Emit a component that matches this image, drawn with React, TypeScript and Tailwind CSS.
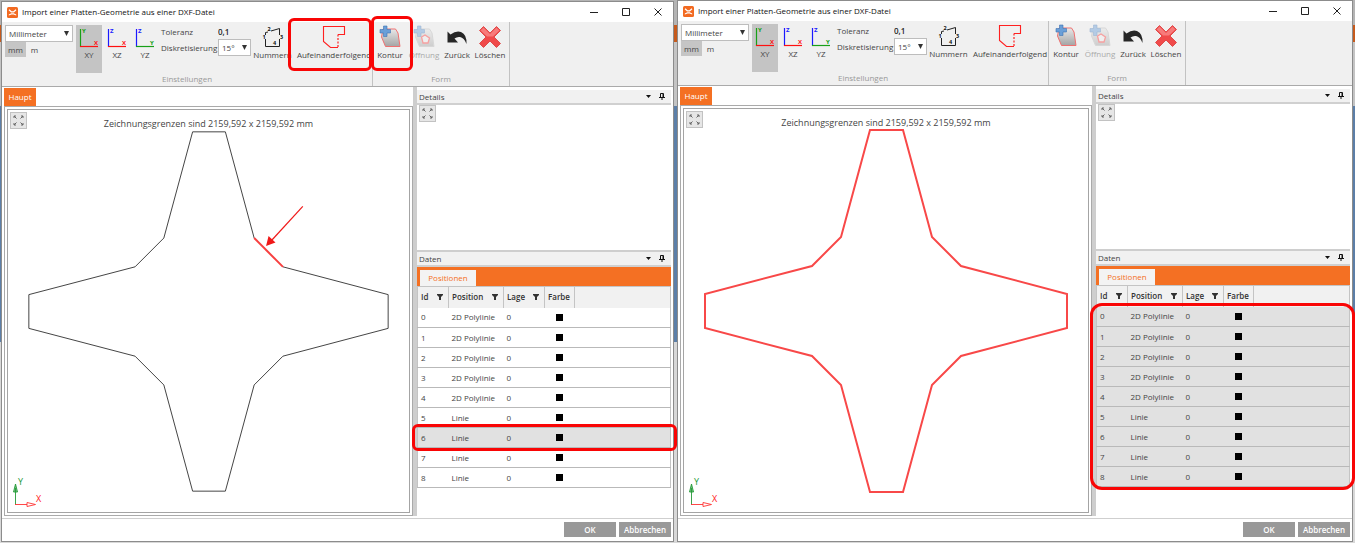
import React from "react";

type Plane = { name: string; up: string; side: string; upColor: string; sideColor: string };

const planes: Plane[] = [
  { name: "XY", up: "Y", side: "X", upColor: "#18a018", sideColor: "#ff1010" },
  { name: "XZ", up: "Z", side: "X", upColor: "#1a1aff", sideColor: "#ff1010" },
  { name: "YZ", up: "Z", side: "Y", upColor: "#1a1aff", sideColor: "#18a018" },
];

const rows = [0, 1, 2, 3, 4, 5, 6, 7, 8].map((id) => ({
  id,
  position: id < 5 ? "2D Polylinie" : "Linie",
  lage: 0,
}));

const outline =
  "186,21 219,21 248,128 277,157 383,185 383,219 277,247 248,276 219,383 186,383 157,276 128,247 21,219 21,185 128,157 157,128";

function Logo() {
  return (
    <svg className="size-[11px] shrink-0" viewBox="0 0 11 11">
      <rect width="11" height="11" rx="1.5" fill="#f26a21" />
      <path d="M2 2.800 L4.300 4.800 H6.700 L9 2.800" stroke="#fff" strokeWidth="1.2" fill="none" />
      <path d="M1.800 8.600 V7.600 L4.300 6.200 H6.700 L9.200 7.600 V8.600 L6.500 7.600 H4.500 Z" fill="#fff" />
    </svg>
  );
}

function PlaneIcon({ plane }: { plane: Plane }) {
  return (
    <svg className="h-[22px] w-[22px]" viewBox="0 0 22 22">
      <path d="M2.5 2 V20" stroke={plane.upColor} strokeWidth="1.2" />
      <path d="M2 19.5 H20" stroke={plane.sideColor} strokeWidth="1.2" />
      <text x="4" y="6" fontSize="6" fontWeight="700" fill={plane.upColor}>{plane.up}</text>
      <text x="16" y="18" fontSize="6" fontWeight="700" fill={plane.sideColor}>{plane.side}</text>
    </svg>
  );
}

function NumberIcon() {
  return (
    <svg className="h-6 w-6" viewBox="0 0 24 24">
      <path d="M4.500 14 V21.500 H18.500 V14 M18.500 10 V3.500 L10 6 M4.500 10 V7.500 L7 7" fill="none" stroke="#222" strokeWidth="1" />
      <g fontSize="5.5" fontWeight="700" fill="#111">
        <text x="6.500" y="6">2</text>
        <text x="1.500" y="14">1</text>
        <text x="19" y="14">3</text>
        <text x="12" y="20">4</text>
      </g>
    </svg>
  );
}

function SequenceIcon() {
  return (
    <svg className="h-6 w-6" viewBox="0 0 24 24">
      <path d="M16 22.5 H8.5 L1.5 16.5 V1.5 H22.5 V9.5 H16" fill="none" stroke="#ff2020" strokeWidth="1.1" />
      <path d="M16 9.5 V22" stroke="#ff2020" strokeWidth="1.2" strokeDasharray="2 1.5" />
    </svg>
  );
}

function ShapeIcon({ id, hole }: { id: string; hole?: boolean }) {
  return (
    <svg className={hole ? "h-6 w-6 opacity-45" : "h-6 w-6"} viewBox="0 0 24 24">
      <defs>
        <linearGradient id={id} x1="0" y1="0" x2="0" y2="1">
          <stop offset="0" stopColor="#e8e8e8" />
          <stop offset="1" stopColor="#a4a4a4" />
        </linearGradient>
      </defs>
      <path d="M5 4 H17.500 L20 8 L22 21.500 H7.500 L3.500 12 Z" fill={`url(#${id})`} stroke={hole ? "#bbb" : "#ef7070"} strokeWidth="1" />
      {hole && <path d="M9.500 12 L13 10 L17.500 13 L16 18 H11 Z" fill="#eee" stroke="#ff4040" strokeWidth="1.3" />}
      <path d="M5.500 1 H9 V4.500 H12.500 V8 H9 V11.500 H5.500 V8 H2 V4.500 H5.500 Z" fill="#6a9fd8" stroke="#3e74b3" strokeWidth=".6" />
    </svg>
  );
}

function UndoIcon() {
  return (
    <svg className="h-6 w-6" viewBox="0 0 24 24">
      <path d="M2.500 6.500 L5.500 9.500 Q11 5.500 16 7 Q22 9.500 21.500 19 Q19 12.500 15 12 Q12 11.500 9.500 13.500 L13 17.500 H2.500 Z" fill="#262626" />
    </svg>
  );
}

function DeleteIcon() {
  return (
    <svg className="h-6 w-6" viewBox="0 0 24 24">
      <path d="M5.500 1.500 L12 8 L18.500 1.500 L22.500 5.500 L16 12 L22.500 18.500 L18.500 22.500 L12 16 L5.500 22.500 L1.500 18.500 L8 12 L1.500 5.500 Z" fill="#f04a4a" stroke="#d93636" strokeWidth=".8" strokeLinejoin="round" />
      <path d="M5.500 2.600 L12 9 L18.500 2.600 L21.300 5.500 L15 11.500 H9 L2.600 5.500 Z" fill="#f77b7b" />
    </svg>
  );
}

function Tool({ label, icon, muted, marked, className }: { label: string; icon: React.ReactNode; muted?: boolean; marked?: string; className: string }) {
  return (
    <button type="button" disabled={muted} className={`relative flex shrink-0 flex-col items-center ${className}`}>
      {icon}
      <span className={muted ? "leading-3 text-[#aaa]" : "leading-3"}>{label}</span>
      {marked && <span className={`pointer-events-none absolute z-10 rounded-md border-[3px] border-[#f90505] ${marked}`} />}
    </button>
  );
}

function FitButton() {
  return (
    <button type="button" aria-label="Einpassen" className="flex size-[17px] items-center justify-center border border-[#c2c2c2] bg-[#e6e6e6]">
      <svg className="size-[13px]" viewBox="0 0 13 13" fill="none" stroke="#666" strokeWidth="1">
        <path d="M4.500 4.500 L2 2 M2 4 V2 H4 M8.500 4.500 L11 2 M9 2 H11 V4 M4.500 8.500 L2 11 M2 9 V11 H4 M8.500 8.500 L11 11 M11 9 V11 H9" />
      </svg>
    </button>
  );
}

function PanelHeader({ title }: { title: string }) {
  return (
    <div className="flex h-[15px] shrink-0 items-center border-b-2 border-[#d0d0d0] bg-[#f1f1f1] pr-1.5 pl-0.5">
      <h2 className="flex-1">{title}</h2>
      <button type="button" aria-label="Menü" className="mr-2">
        <svg className="h-[3px] w-[5px]" viewBox="0 0 5 3"><path d="M0 0 H5 L2.500 3 Z" fill="#111" /></svg>
      </button>
      <button type="button" aria-label="Anheften">
        <svg className="h-[7px] w-[6px]" viewBox="0 0 6 7"><path d="M1.500 4 V.5 H4.500 V4 M0 4.500 H6 M3 4.500 V7 M4 1 V4" fill="none" stroke="#111" /></svg>
      </button>
    </div>
  );
}

function FilterIcon() {
  return (
    <svg className="h-[6px] w-[6px]" viewBox="0 0 6 6"><path d="M0 0 H6 V1 L4 3 V6 H2 V3 L0 1 Z" fill="#333" /></svg>
  );
}

function Arrow() {
  return (
    <svg className="h-[7px] w-[5px]" viewBox="0 0 5 7"><path d="M0 1 H5 L2.500 6 Z" fill="#333" /></svg>
  );
}

function Picker({ id, value, label, className }: { id: string; value: string; label?: string; className: string }) {
  return (
    <div className={`relative flex items-center border border-[#bdbdbd] bg-white ${className}`}>
      <select id={id} aria-label={label} className="h-full w-full appearance-none pl-[3px] outline-none">
        <option>{value}</option>
      </select>
      <span className="pointer-events-none absolute right-[3px]"><Arrow /></span>
    </div>
  );
}

function Ribbon({ id, marked }: { id: string; marked: boolean }) {
  return (
    <div className="flex h-[65px] shrink-0 border-b border-[#aaa] bg-[#f0f0f0]">
      <section className="flex flex-col border-r border-[#c2c2c2]">
        <div className="flex flex-1 pt-[3px]">
          <div className="ml-[3px] w-[68px]">
            <Picker id={`${id}-unit`} label="Einheit" value="Millimeter" className="h-[17px]" />
            <div className="flex">
              <button type="button" className="h-[15px] w-[21px] bg-[#c5c5c5]">mm</button>
              <button type="button" className="h-[15px] w-[17px]">m</button>
            </div>
          </div>
          <div className="ml-[3px] flex gap-0.5">
            {planes.map((p, i) => (
              <button key={p.name} type="button" className={i === 0 ? "flex h-12 w-[26px] flex-col items-center bg-[#c4c4c4] pt-0.5" : "flex h-12 w-[26px] flex-col items-center pt-0.5"}>
                <PlaneIcon plane={p} />
                <span className="leading-3">{p.name}</span>
              </button>
            ))}
          </div>
          <div className="ml-[3px] w-[90px]">
            <div className="flex h-[14px] items-center">
              <label htmlFor={`${id}-tol`} className="w-[57px]">Toleranz</label>
              <input id={`${id}-tol`} defaultValue="0,1" className="w-6 bg-transparent font-semibold text-[#222] outline-none" />
            </div>
            <div className="flex items-center">
              <label htmlFor={`${id}-disc`} className="w-[57px] shrink-0 whitespace-nowrap">Diskretisierung</label>
              <Picker id={`${id}-disc`} value="15°" className="h-[17px] w-[33px]" />
            </div>
          </div>
          <Tool label="Nummern" icon={<NumberIcon />} className="ml-0.5 w-[39px]" />
          <Tool label="Aufeinanderfolgend" icon={<SequenceIcon />} className="ml-1 w-[76px]" marked={marked ? "-top-[7px] bottom-[2px] -left-2 right-0" : undefined} />
        </div>
        <h3 className="pb-px text-center leading-3 text-[#999]">Einstellungen</h3>
      </section>
      <section className="flex flex-col border-r border-[#c2c2c2] px-0.5">
        <div className="flex flex-1 pt-[3px]">
          <Tool label="Kontur" icon={<ShapeIcon id={`${id}-k`} />} className="w-[30px]" marked={marked ? "-top-[9px] bottom-[2px] -left-1 -right-2" : undefined} />
          <Tool label="Öffnung" icon={<ShapeIcon id={`${id}-o`} hole />} muted className="ml-0.5 w-[34px]" />
          <Tool label="Zurück" icon={<UndoIcon />} className="w-[32px]" />
          <Tool label="Löschen" icon={<DeleteIcon />} className="w-[34px]" />
        </div>
        <h3 className="pb-px text-center leading-3 text-[#999]">Form</h3>
      </section>
    </div>
  );
}

function Drawing({ all }: { all: boolean }) {
  return (
    <div className="relative min-h-0 flex-1 border border-[#a4a4a4] bg-white">
      <svg className="absolute inset-0 h-full w-full" viewBox="0 0 404 403">
        <polygon points={outline} fill="none" stroke={all ? "#f84848" : "#444"} strokeWidth={all ? 2 : 1} />
        {!all && (
          <g stroke="#f01818" fill="#f01818">
            <path d="M248 128 L277 157" stroke="#f84040" strokeWidth="2" />
            <path d="M297 96 L265 131" strokeWidth="1.200" />
            <path d="M260 136 L262.500 126 L269.500 132.500 Z" stroke="none" />
          </g>
        )}
      </svg>
      <svg className="absolute bottom-[2px] left-[2px] h-10 w-9" viewBox="0 0 36 40">
        <path d="M5.500 35 V18 M3.500 22 L5.500 14 L7.500 22 Z" stroke="#249a38" fill="#7cc586" strokeWidth=".9" />
        <path d="M5 34.500 H17 M17 32.500 L25.500 34.500 L17 36.500 Z" stroke="#f33" fill="#fff" strokeWidth=".9" />
        <text x="8" y="15" fontSize="9" fill="#249a38">Y</text>
        <text x="26" y="32" fontSize="9" fill="#f22">X</text>
      </svg>
      <div className="absolute top-[2px] left-[2px]"><FitButton /></div>
      <p className="relative pt-1.5 text-center text-[9px] leading-4">Zeichnungsgrenzen sind 2159,592 x 2159,592 mm</p>
    </div>
  );
}

function DataTable({ all }: { all: boolean }) {
  const columns = ["Id", "Position", "Lage", "Farbe"];
  return (
    <div className="relative">
      <table className="w-full table-fixed border-collapse border border-[#c4c4c4] text-left">
        <colgroup>
          <col className="w-[31px]" />
          <col className="w-[55px]" />
          <col className="w-[41px]" />
          <col className="w-[30px]" />
          <col />
        </colgroup>
        <thead>
          <tr className="h-[21px] bg-[#f1f1f1] text-[#333]">
            {columns.map((c) => (
              <th key={c} className="border-r border-[#c4c4c4] p-0 px-[3px] font-semibold">
                <span className="flex items-center justify-between pr-0.5">
                  {c}
                  {c !== "Farbe" && <FilterIcon />}
                </span>
              </th>
            ))}
            <td />
          </tr>
        </thead>
        <tbody>
          {rows.map((r) => (
            <tr key={r.id} className={all || r.id === 6 ? "relative h-5 border-b border-[#b9b9b9] bg-[#e1e1e1]" : "h-5 border-b border-[#b9b9b9] bg-white"}>
              <td className="p-0 pl-[3px]">{r.id}</td>
              <td className="p-0 pl-[3px]">{r.position}</td>
              <td className="p-0 pl-[3px]">{r.lage}</td>
              <td className="p-0 pl-[11px]"><span className="block size-[7px] bg-black" /></td>
              <td className="p-0">
                {!all && r.id === 6 && <span className="pointer-events-none absolute -inset-x-[6px] -inset-y-1 z-10 rounded-md border-[3px] border-[#f90505]" />}
              </td>
            </tr>
          ))}
        </tbody>
      </table>
      {all && <span className="pointer-events-none absolute top-[18px] -right-[5px] -bottom-[3px] -left-[6px] z-10 rounded-xl border-[3px] border-[#f90505]" />}
    </div>
  );
}

function ImportWindow({ id, all, className }: { id: string; all: boolean; className: string }) {
  return (
    <section className={`relative flex min-w-0 flex-col border border-[#8c8c8c] bg-white ${className}`}>
      <header className="flex h-5 shrink-0 items-center gap-1 pr-[11px] pl-[5px] text-[#111]">
        <Logo />
        <h1 className="flex-1">Import einer Platten-Geometrie aus einer DXF-Datei</h1>
        <div className="flex items-center gap-6">
          <button type="button" aria-label="Minimieren"><svg className="size-2" viewBox="0 0 8 8"><path d="M0 4.500 H8" stroke="#222" /></svg></button>
          <button type="button" aria-label="Maximieren"><svg className="size-2" viewBox="0 0 8 8"><path d="M.5 .5 H7.500 V7.500 H.5 Z" stroke="#222" fill="none" /></svg></button>
          <button type="button" aria-label="Schließen"><svg className="size-2" viewBox="0 0 8 8"><path d="M.5 .5 L7.500 7.500 M7.500 .5 L.5 7.500" stroke="#222" /></svg></button>
        </div>
      </header>
      <Ribbon id={id} marked={!all} />
      <main className="flex min-h-0 flex-1">
        <div className="flex min-w-0 flex-1 flex-col pt-px pl-0.5">
          <button type="button" className="h-[18px] w-8 shrink-0 bg-[#f47023] text-white">Haupt</button>
          <div className="flex min-h-0 flex-1 border border-[#aaa] p-0.5">
            <Drawing all={all} />
          </div>
        </div>
        <aside className="flex w-[260px] shrink-0 flex-col border-l-4 border-[#cecece] pt-[3px] pr-0.5">
          <PanelHeader title="Details" />
          <div className="h-[147px] shrink-0 border-b-2 border-[#cecece] pl-0.5"><FitButton /></div>
          <PanelHeader title="Daten" />
          <div className="flex h-[19px] shrink-0 items-end bg-[#f47023] pl-[3px]">
            <button type="button" className="h-4 w-14 bg-[#f3f3f3] text-[#f47023]">Positionen</button>
          </div>
          <DataTable all={all} />
        </aside>
      </main>
      <footer className="mt-[2px] flex h-[23px] shrink-0 justify-end gap-[3px] border-t border-[#cfcfcf] pt-[3px] pr-0.5 font-semibold text-white">
        <button type="button" className="h-[15px] w-[52px] bg-[#999]">OK</button>
        <button type="button" className="h-[15px] w-[52px] bg-[#999]">Abbrechen</button>
      </footer>
    </section>
  );
}

export default function App() {
  return (
    <div className="h-screen min-h-[520px] min-w-[1240px] bg-white pr-[5px] font-['Open_Sans','Noto_Sans',sans-serif] text-[8px] leading-3 text-[#444]">
      <div className="flex h-full gap-[3px] bg-[linear-gradient(#b4b4b4_0_25px,#c65a1c_25px_42px,#c4c4c4_42px_106px,#5c7fa8_106px_342px,#d8d8d8_342px)] pr-0.5 pb-px pl-px">
        <ImportWindow id="single" all={false} className="z-10 mt-px grow-[673] basis-0" />
        <ImportWindow id="chain" all className="grow-[676] basis-0" />
      </div>
    </div>
  );
}
